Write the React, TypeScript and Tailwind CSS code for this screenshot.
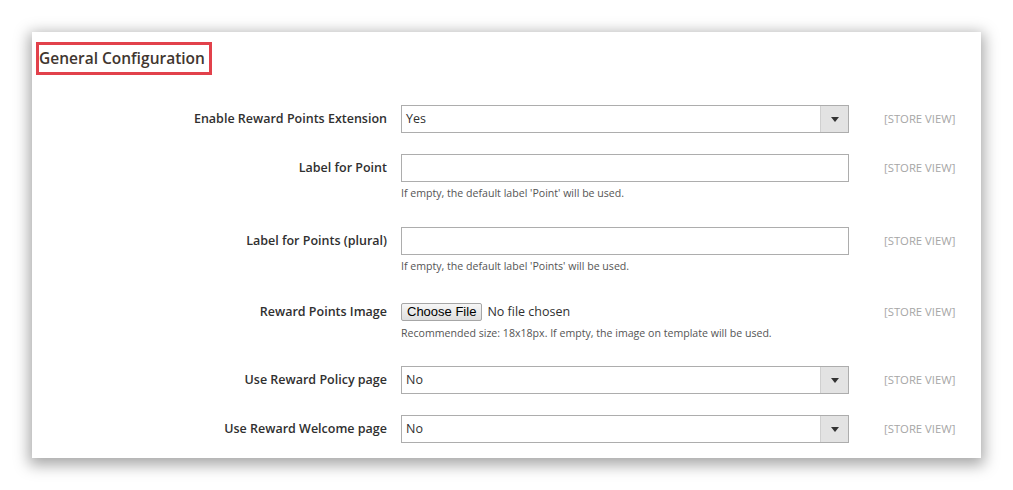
const font = { fontFamily: '"Open Sans", "Liberation Sans", sans-serif' }

type Row = {
  label: string
  kind: 'select' | 'text' | 'file'
  value?: string
  note?: string
  mt: string
}

const rows: Row[] = [
  { label: 'Enable Reward Points Extension', kind: 'select', value: 'Yes', mt: 'mt-[30px]' },
  {
    label: 'Label for Point',
    kind: 'text',
    note: "If empty, the default label 'Point' will be used.",
    mt: 'mt-[21px]'
  },
  {
    label: 'Label for Points (plural)',
    kind: 'text',
    note: "If empty, the default label 'Points' will be used.",
    mt: 'mt-[28px]'
  },
  {
    label: 'Reward Points Image',
    kind: 'file',
    note: 'Recommended size: 18x18px. If empty, the image on template will be used.',
    mt: 'mt-[30px]'
  },
  { label: 'Use Reward Policy page', kind: 'select', value: 'No', mt: 'mt-[27px]' },
  { label: 'Use Reward Welcome page', kind: 'select', value: 'No', mt: 'mt-[21px]' }
]

const Control = ({ row }: { row: Row }) => {
  if (row.kind === 'select') {
    return (
      <div className="flex h-[28px] w-[448px] border border-[#adadad] bg-white">
        <div className="flex flex-1 items-center pl-[4px] text-[12.5px] text-[#303030]">
          {row.value}
        </div>
        <div className="flex w-[28px] items-center justify-center border-l border-[#d0d0d0] bg-[#e3e3e3]">
          <div className="h-0 w-0 border-x-[4px] border-t-[5px] border-x-transparent border-t-[#333]" />
        </div>
      </div>
    )
  }
  if (row.kind === 'text') {
    return <div className="h-[28px] w-[448px] border border-[#adadad] bg-white" />
  }
  return (
    <div className="flex h-[20px] w-[448px] items-center">
      <div
        className="flex h-[18px] items-center rounded-[2px] border border-[#a6a6a6] bg-gradient-to-b from-[#f6f6f6] to-[#dedede] px-[5px] text-[13px] text-black"
        style={{ fontFamily: '"Liberation Sans", Arial, sans-serif' }}>
        Choose File
      </div>
      <span className="ml-[5px] text-[12.5px] text-[#303030]">No file chosen</span>
    </div>
  )
}

export default function App() {
  return (
    <div className="min-h-[490px] bg-white pl-[32px] pt-[32px]" style={font}>
      <div className="h-[426px] w-[949px] bg-white shadow-[0_4px_14px_3px_rgba(0,0,0,0.35)]">
        <div className="flex pl-[4px] pt-[10px]">
          <div className="flex h-[33px] w-[176px] items-center whitespace-nowrap border-[3px] border-[#e2414b] pl-0">
            <span className="text-[15.5px] font-semibold text-[#41362f]">General Configuration</span>
          </div>
        </div>

        {rows.map((row) => (
          <div key={row.label} className={row.mt}>
            <div className="flex items-center">
              <div className="w-[355px] text-right text-[12.5px] font-semibold text-[#303030]">
                {row.label}
              </div>
              <div className="ml-[14px]">
                <Control row={row} />
              </div>
              <div className="ml-[35px] text-[11.3px] text-[#a6a6a6]">[STORE VIEW]</div>
            </div>
            {row.note && (
              <div className="ml-[369px] mt-[5px] text-[10.6px] leading-[12px] text-[#555]">{row.note}</div>
            )}
          </div>
        ))}
      </div>
    </div>
  )
}
